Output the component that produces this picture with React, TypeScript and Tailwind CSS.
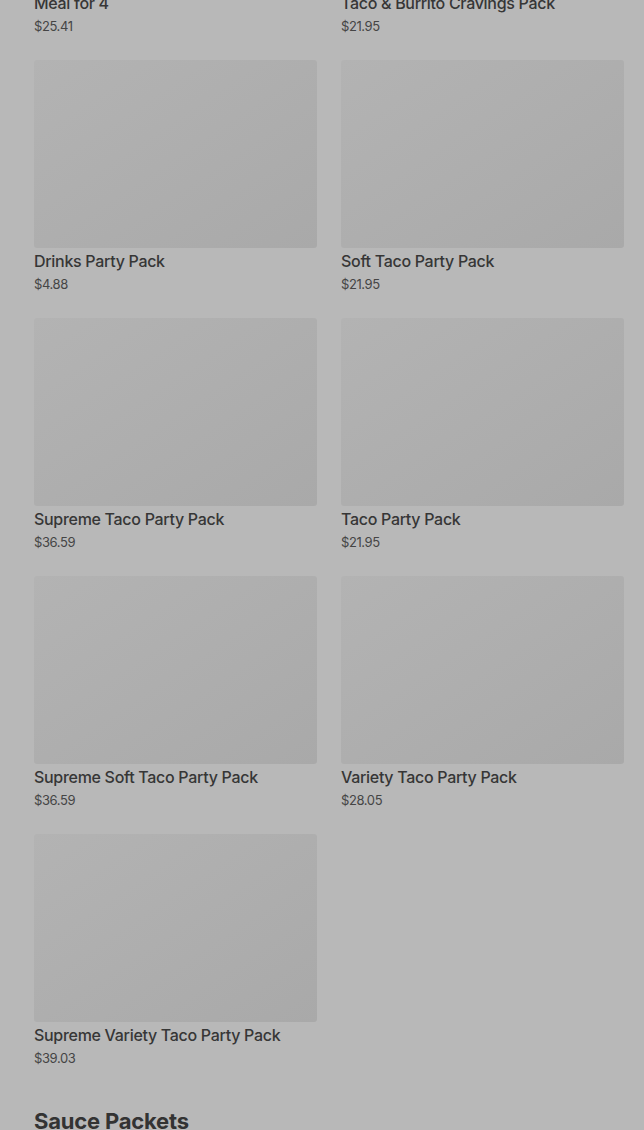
import React from "react";

const items = [
  { name: "Meal for 4", price: "$25.41" },
  { name: "Taco & Burrito Cravings Pack", price: "$21.95" },
  { name: "Drinks Party Pack", price: "$4.88" },
  { name: "Soft Taco Party Pack", price: "$21.95" },
  { name: "Supreme Taco Party Pack", price: "$36.59" },
  { name: "Taco Party Pack", price: "$21.95" },
  { name: "Supreme Soft Taco Party Pack", price: "$36.59" },
  { name: "Variety Taco Party Pack", price: "$28.05" },
  { name: "Supreme Variety Taco Party Pack", price: "$39.03" },
];

export default function App() {
  return (
    <div
      className="w-[644px] h-[1130px] overflow-hidden bg-[#b8b8b8]"
      style={{ fontFamily: "Inter, 'Noto Sans', sans-serif" }}
    >
      <div className="pl-[34px] pr-[20px] mt-[-198px]">
        <div className="grid grid-cols-2 gap-x-[24px] gap-y-[25px]">
          {items.map((it) => (
            <div key={it.name} className="flex flex-col">
              <div className="h-[188px] rounded-[3px] bg-gradient-to-br from-[#b3b3b3] to-[#a9a9a9]" />
              <div className="mt-[2px] text-[16px] leading-[22px] font-medium text-[#363636] tracking-[-0.3px]">
                {it.name}
              </div>
              <div className="mt-[3px] text-[13px] leading-[18px] text-[#454545] tracking-[-0.4px]">
                {it.price}
              </div>
            </div>
          ))}
        </div>
        <h2 className="mt-[38px] text-[22px] leading-[32px] font-bold text-[#333333] tracking-[-0.2px]">
          Sauce Packets
        </h2>
      </div>
    </div>
  );
}
